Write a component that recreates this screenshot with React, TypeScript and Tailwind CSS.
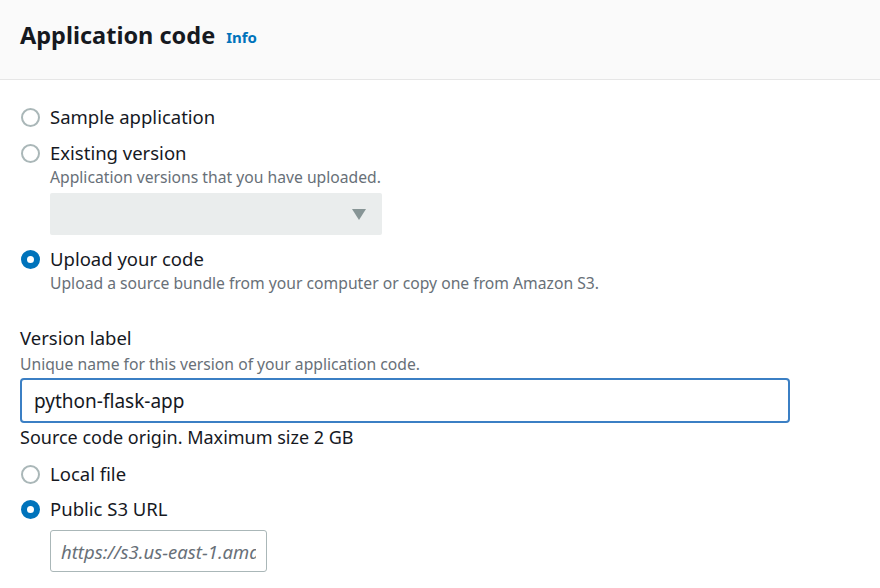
import React from "react";

type RadioProps = {
  checked?: boolean;
  label: string;
  description?: string;
  children?: React.ReactNode;
};

function Radio({ checked, label, description, children }: RadioProps) {
  return (
    <div className="flex items-start">
      <div className="w-[30px] h-[24px] pl-[1px] flex items-center">
        {checked ? (
          <span className="w-[19px] h-[19px] rounded-full border-[6px] border-[#0073bb] bg-white" />
        ) : (
          <span className="w-[19px] h-[19px] rounded-full border-2 border-[#aab7b8] bg-white" />
        )}
      </div>
      <div className="flex flex-col">
        <span className="text-[18.5px] leading-[24px] text-[#16191f]">{label}</span>
        {description && (
          <span className="text-[15.7px] leading-[20px] text-[#687078] mt-[2px]">{description}</span>
        )}
        {children}
      </div>
    </div>
  );
}

export default function App() {
  return (
    <div className="w-[880px] h-[588px] bg-white overflow-hidden font-['Noto_Sans',sans-serif]">
      <div className="h-[80px] bg-[#fafafa] border-b border-[#e6e6e6] px-[20px] pb-[8px] flex items-center">
        <h2 className="text-[23.5px] font-bold text-[#16191f]">Application code</h2>
        <a className="ml-[11px] mt-[3px] text-[15px] font-bold text-[#0073bb]">Info</a>
      </div>

      <div className="px-[20px] pt-[25px]">
        <div className="flex flex-col gap-[12px]">
          <Radio label="Sample application" />
          <Radio label="Existing version" description="Application versions that you have uploaded.">
            <div className="mt-[6px] w-[332px] h-[42px] rounded-[2px] bg-[#eaeded] flex items-center justify-end pr-[16px]">
              <svg width="14" height="11" viewBox="0 0 14 11">
                <path d="M0 0h14L7 11z" fill="#879596" />
              </svg>
            </div>
          </Radio>
          <Radio
            checked
            label="Upload your code"
            description="Upload a source bundle from your computer or copy one from Amazon S3."
          />
        </div>

        <div className="mt-[33px]">
          <div className="text-[18.5px] leading-[24px] text-[#16191f]">Version label</div>
          <div className="text-[15.7px] leading-[20px] text-[#687078] mt-[4px]">
            Unique name for this version of your application code.
          </div>
          <input
            className="mt-[4px] w-[770px] h-[45px] rounded-[4px] border-2 border-[#3b7fc4] px-[12px] text-[19px] text-[#16191f] outline-none"
            defaultValue="python-flask-app"
          />
          <div className="mt-[2px] text-[18px] leading-[24px] text-[#16191f]">
            Source code origin. Maximum size 2 GB
          </div>
        </div>

        <div className="mt-[13px] flex flex-col gap-[11px]">
          <Radio label="Local file" />
          <Radio checked label="Public S3 URL">
            <input
              className="mt-[9px] w-[217px] h-[42px] rounded-[3px] border border-[#aab7b8] px-[10px] text-[18.5px] italic placeholder:text-[#687078] outline-none"
              placeholder="https://s3.us-east-1.amazonaws.com"
            />
          </Radio>
        </div>
      </div>
    </div>
  );
}
